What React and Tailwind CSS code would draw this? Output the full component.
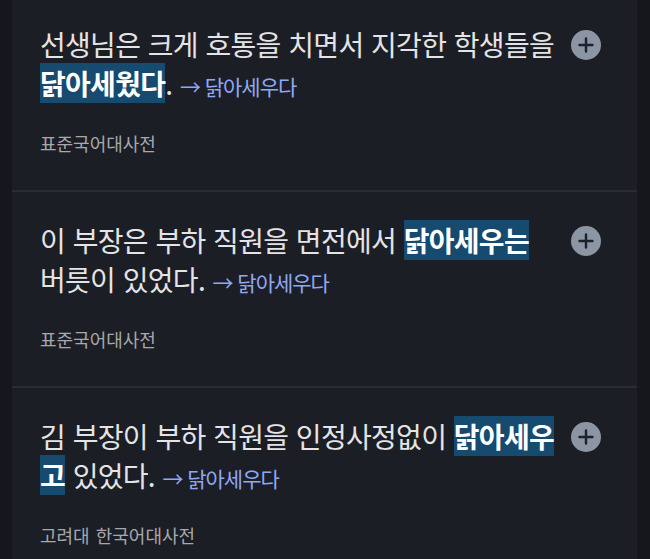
const EXAMPLES = [
  {
    id: 1,
    parts: [
      { text: '선생님은 크게 호통을 치면서 지각한 학생들을 ' },
      { text: '닭아세웠다', mark: true },
      { text: '.' },
    ],
    lemma: '닭아세우다',
    source: '표준국어대사전',
  },
  {
    id: 2,
    parts: [
      { text: '이 부장은 부하 직원을 면전에서 ' },
      { text: '닭아세우는', mark: true },
      { text: ' 버릇이 있었다.' },
    ],
    lemma: '닭아세우다',
    source: '표준국어대사전',
  },
  {
    id: 3,
    parts: [
      { text: '김 부장이 부하 직원을 인정사정없이 ' },
      { text: '닭아세우고', mark: true },
      { text: ' 있었다.' },
    ],
    lemma: '닭아세우다',
    source: '고려대 한국어대사전',
  },
]

const FONT = "font-['Noto_Sans_CJK_KR','Noto_Sans',sans-serif]"

function PlusButton() {
  return (
    <button className="ml-[11px] mt-[5px] flex h-[30px] w-[30px] shrink-0 items-center justify-center rounded-full bg-[#8b95a4]">
      <svg width="16" height="16" viewBox="0 0 16 16">
        <path d="M8 1.5v13M1.5 8h13" stroke="#1d212a" strokeWidth="2.4" strokeLinecap="round" />
      </svg>
    </button>
  )
}

function ExampleRow({ item, first }) {
  return (
    <div className={`px-[28px] pt-[29px] pb-[34px] ${first ? '' : 'border-t-2 border-[#292c34]'}`}>
      <div className="flex items-start">
        <p className="w-[520px] text-[28px] leading-[39px] tracking-[-0.7px] [word-spacing:2px] text-[#e4e4e6]">
          {item.parts.map((p, i) =>
            p.mark ? (
              <span key={i} className="bg-[#174a6f] font-semibold text-white">
                {p.text}
              </span>
            ) : (
              <span key={i}>{p.text}</span>
            )
          )}{' '}
          <span className="text-[21px] tracking-[-1px] [word-spacing:1px] text-[#8fa8f4]">
            → {item.lemma}
          </span>
        </p>
        <PlusButton />
      </div>
      <p className="mt-[24px] text-[18px] leading-[26px] [word-spacing:2px] text-[#a6a8ae]">
        {item.source}
      </p>
    </div>
  )
}

export default function App() {
  return (
    <div className={`min-h-screen overflow-hidden bg-[#15171c] pl-[12px] pr-[13px] ${FONT}`}>
      <div className="-mt-[4px] bg-[#1c1e25]">
        {EXAMPLES.map((item, i) => (
          <ExampleRow key={item.id} item={item} first={i === 0} />
        ))}
      </div>
    </div>
  )
}
